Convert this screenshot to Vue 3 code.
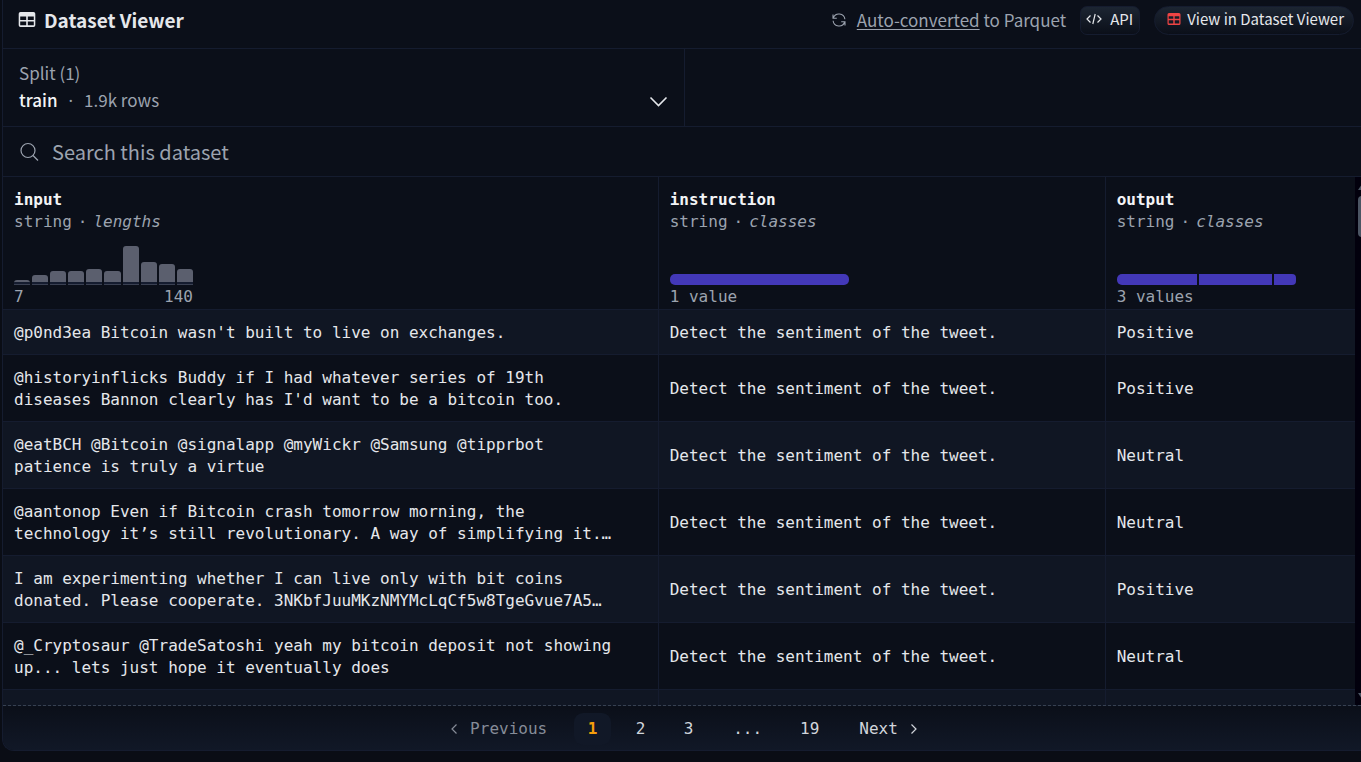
<script setup>
import { ref } from 'vue'

const query = ref('')
const bars = [4, 9, 13, 13, 15, 13, 38, 22, 20, 15]
const prompt = 'Detect the sentiment of the tweet.'
const rows = [
  { input: "@p0nd3ea Bitcoin wasn't built to live on exchanges.", output: 'Positive' },
  { input: "@historyinflicks Buddy if I had whatever series of 19th\ndiseases Bannon clearly has I'd want to be a bitcoin too.", output: 'Positive' },
  { input: '@eatBCH @Bitcoin @signalapp @myWickr @Samsung @tipprbot\npatience is truly a virtue', output: 'Neutral' },
  { input: '@aantonop Even if Bitcoin crash tomorrow morning, the\ntechnology it’s still revolutionary. A way of simplifying it.…', output: 'Neutral' },
  { input: 'I am experimenting whether I can live only with bit coins\ndonated. Please cooperate. 3NKbfJuuMKzNMYMcLqCf5w8TgeGvue7A5…', output: 'Positive' },
  { input: '@_Cryptosaur @TradeSatoshi yeah my bitcoin deposit not showing\nup... lets just hope it eventually does', output: 'Neutral' },
]
const pages = ['1', '2', '3', '...', '19']
</script>

<template>
  <main class="viewer">
    <header class="top">
      <h1>
        <svg width="18" height="16" viewBox="0 0 18 16" aria-hidden="true">
          <path fill="currentColor" fill-rule="evenodd" d="M2.5 0h13A1.800 1.800 0 0 1 17.300 1.800v11.400a1.800 1.800 0 0 1-1.800 1.800h-13A1.800 1.800 0 0 1 .7 13.200V1.800A1.800 1.800 0 0 1 2.500 0ZM2.200 4.500v3.500h6V4.500Zm7.600 0v3.500h6V4.500ZM2.200 9.500v3.800h6V9.500Zm7.600 0v3.800h6V9.500Z" />
        </svg>
        Dataset Viewer
      </h1>
      <p class="converted">
        <svg width="16" height="16" viewBox="0 0 16 16" fill="none" stroke="currentColor" stroke-width="1.100" aria-hidden="true">
          <path d="M2 2.500v3.800h3.800M14 13.500V9.700h-3.800M2.300 6A6 6 0 0 1 13.900 7.300M13.700 10A6 6 0 0 1 2.100 8.700" />
        </svg>
        <span><a href="#">Auto-converted</a> to Parquet</span>
      </p>
      <button class="chip api" type="button">
        <svg width="16" height="12" viewBox="0 0 16 12" fill="none" stroke="currentColor" stroke-width="1.200" aria-hidden="true">
          <path d="M4.500 2.500 1 6l3.500 3.500M11.500 2.500 15 6l-3.500 3.500M9.200 1 6.800 11" />
        </svg>
        API
      </button>
      <button class="chip pill" type="button">
        <svg width="14" height="12" viewBox="0 0 14 12" aria-hidden="true">
          <path fill="#ef4444" fill-rule="evenodd" d="M2 0h10a1.500 1.500 0 0 1 1.500 1.500v9A1.500 1.500 0 0 1 12 12H2a1.500 1.500 0 0 1-1.500-1.500v-9A1.500 1.500 0 0 1 2 0ZM1.700 3.300v2.500h4.600V3.300Zm6 0v2.500h4.600V3.300ZM1.700 7.200v3.400h4.600V7.200Zm6 0v3.400h4.600V7.200Z" />
        </svg>
        View in Dataset Viewer
      </button>
    </header>

    <section class="splits">
      <button class="split" type="button">
        <span>
          <span class="line">Split (1)</span>
          <span class="line"><span class="name">train</span><span class="dot">·</span>1.9k rows</span>
        </span>
        <svg width="20" height="12" viewBox="0 0 20 12" fill="none" stroke="currentColor" stroke-width="1.600" aria-hidden="true">
          <path d="m2.500 1.500 8 8 8-8" />
        </svg>
      </button>
    </section>

    <label class="search">
      <svg width="20" height="20" viewBox="0 0 20 20" fill="none" stroke="currentColor" stroke-width="1.200" aria-hidden="true">
        <circle cx="9" cy="8.500" r="7" /><path d="m14 13.500 5 5" />
      </svg>
      <input v-model="query" type="text" placeholder="Search this dataset" aria-label="Search this dataset">
    </label>

    <div class="grid">
      <div class="scroller">
        <table>
          <colgroup><col class="c1"><col class="c2"><col class="c3"></colgroup>
          <thead>
            <tr>
              <th scope="col">
                <div class="field">input</div>
                <div class="kind">string<span class="sep">·</span><i>lengths</i></div>
                <div class="chart histogram">
                  <span v-for="(b, i) in bars" :key="i" :style="{ height: b + 'px' }"></span>
                </div>
                <div class="legend"><span>7</span><span>140</span></div>
              </th>
              <th scope="col">
                <div class="field">instruction</div>
                <div class="kind">string<span class="sep">·</span><i>classes</i></div>
                <div class="chart classes"><span class="full"></span></div>
                <div class="legend">1 value</div>
              </th>
              <th scope="col">
                <div class="field">output</div>
                <div class="kind">string<span class="sep">·</span><i>classes</i></div>
                <div class="chart classes"><span class="s1"></span><span class="s2"></span><span class="s3"></span></div>
                <div class="legend">3 values</div>
              </th>
            </tr>
          </thead>
          <tbody>
            <tr v-for="r in rows" :key="r.input">
              <td>{{ r.input }}</td>
              <td>{{ prompt }}</td>
              <td>{{ r.output }}</td>
            </tr>
            <tr><td>&nbsp;</td><td></td><td></td></tr>
          </tbody>
        </table>
      </div>
      <div class="scrollbar" aria-hidden="true">
        <svg width="8" height="6" viewBox="0 0 8 6"><path d="M0 6 4 0l4 6Z" fill="#4b5563" /></svg>
        <span class="thumb"></span>
        <svg width="8" height="6" viewBox="0 0 8 6"><path d="m0 0 4 6 4-6Z" fill="#4b5563" /></svg>
      </div>
    </div>

    <nav class="pager" aria-label="Pages">
      <a class="prev" href="#">
        <svg width="8" height="12" viewBox="0 0 8 12" fill="none" stroke="currentColor" stroke-width="1.200" aria-hidden="true"><path d="M6.500 1.500 2 6l4.500 4.500" /></svg>
        Previous
      </a>
      <a v-for="p in pages" :key="p" class="page" :class="{ current: p === '1', gap: p === '...' }" href="#">{{ p }}</a>
      <a class="next" href="#">
        Next
        <svg width="8" height="12" viewBox="0 0 8 12" fill="none" stroke="currentColor" stroke-width="1.200" aria-hidden="true"><path d="M1.500 1.500 6 6l-4.500 4.500" /></svg>
      </a>
    </nav>
  </main>
</template>

<style>
body { background: #0a0d15; }
</style>

<style scoped>
.viewer {
  --line: #151c2f;
  box-sizing: border-box;
  height: calc(100vh - 11px);
  margin-left: 2px;
  display: flex;
  flex-direction: column;
  border-left: 1px solid var(--line);
  border-bottom: 1px solid var(--line);
  border-bottom-left-radius: 12px;
  overflow: hidden;
  background: #0b0f19;
  color: #9ca3af;
  font-family: "Noto Sans CJK SC", "Noto Sans", sans-serif;
  font-size: 17px;
}
svg { flex: none; }
button, input { font: inherit; color: inherit; border: 0; background: none; padding: 0; }
.top {
  height: 40px;
  padding: 0 7px 8px 15px;
  display: flex;
  align-items: center;
  border-bottom: 1px solid var(--line);
}
h1 {
  margin: 0 auto 0 0;
  display: flex;
  align-items: center;
  gap: 8px;
  color: #e5e7eb;
  font-size: 19px;
  line-height: 24px;
  font-weight: 700;
}
.converted { margin: 0 14px 0 0; display: flex; align-items: center; gap: 10px; line-height: 24px; }
.converted a { color: inherit; text-underline-offset: 2px; text-decoration-thickness: 1px; }
.chip {
  box-sizing: border-box;
  height: 29px;
  display: flex;
  align-items: center;
  gap: 8px;
  color: #e5e7eb;
  font-size: 15px;
  line-height: 20px;
  border: 1px solid #151c2f;
  background: linear-gradient(#1c2532, #0b0f19);
}
.api { padding: 0 6px 2px 5px; border-radius: 7px; margin-right: 14px; }
.pill { padding: 0 9px 2px 12px; border-radius: 15px; gap: 6px; }
.splits { display: flex; border-bottom: 1px solid var(--line); }
.split {
  box-sizing: border-box;
  width: calc(50% + 3px);
  height: 77px;
  padding: 0 16px 2px;
  display: flex;
  justify-content: space-between;
  align-items: center;
  text-align: left;
  border-right: 1px solid var(--line);
}
.split svg { color: #e5e7eb; margin-top: 30px; }
.line { display: block; line-height: 27px; }
.name { color: #f3f4f6; font-weight: 500; }
.dot { padding: 0 11px; font-family: "Noto Sans", sans-serif; }
.search {
  height: 49px;
  padding: 0 16px;
  display: flex;
  align-items: center;
  gap: 13px;
  border-bottom: 1px solid var(--line);
}
.search input { flex: 1; font-size: 20px; line-height: 28px; outline: 0; }
.search input::placeholder { color: #9ca3af; opacity: 1; }
.grid { flex: 1; min-height: 0; display: flex; }
.scroller { flex: 1; min-width: 0; overflow: hidden; }
table {
  width: 100%;
  table-layout: fixed;
  border-collapse: separate;
  border-spacing: 0;
  font-family: "DejaVu Sans Mono", monospace;
  font-size: 16px;
  line-height: 22px;
}
.c1 { width: 48.5%; }
.c2 { width: 33.06%; }
th, td {
  text-align: left;
  border-bottom: 1px solid var(--line);
  border-right: 1px solid var(--line);
}
th:last-child, td:last-child { border-right: 0; }
th { padding: 12px 11px 1px; font-weight: 400; vertical-align: top; }
td { padding: 12px 11px 10px; height: 22px; color: #e5e7eb; white-space: pre-line; }
tbody tr:nth-child(odd) { background: #101623; }
.field { color: #f3f4f6; font-weight: 700; }
.sep { padding: 0 6px; }
.chart { width: 179px; height: 52px; margin-bottom: 1px; display: flex; gap: 2px; align-items: flex-end; }
.histogram span { flex: 1; background: #5b5f6e; border-radius: 3px 3px 0 0; border-bottom: 1px solid #3a4052; box-shadow: inset 0 -2px #151c2f; }
.classes span { height: 11px; background: #4338b8; }
.classes .full { flex: 1; border-radius: 5px; }
.s1 { flex: 80; border-radius: 5px 0 0 5px; }
.s2 { flex: 72; }
.s3 { flex: 22; border-radius: 0 4px 4px 0; }
.legend { width: 179px; display: flex; justify-content: space-between; }
.scrollbar {
  width: 6px;
  overflow: hidden;
  box-sizing: border-box;
  padding: 7px 0 6px 3px;
  background: #02000d;
  display: flex;
  flex-direction: column;
}
.thumb { width: 8px; height: 41px; margin: 6px 0 auto; border-radius: 4px; background: #4b5563; flex: none; }
.pager {
  box-sizing: border-box;
  height: 45px;
  padding: 2px 0 0 4px;
  border-top: 1px dashed #374151;
  background: linear-gradient(#0b0f19, #111827);
  display: flex;
  align-items: center;
  justify-content: center;
  font-family: "DejaVu Sans Mono", monospace;
  font-size: 16px;
  line-height: 22px;
}
.pager a { color: #d1d5db; text-decoration: none; }
.pager .prev, .pager .next { display: flex; align-items: center; gap: 12px; }
.pager .prev { color: #868c98; margin-right: 27px; }
.pager .next { margin-left: 17px; }
.page { box-sizing: border-box; min-width: 37px; padding: 5px 12px; margin-right: 11px; text-align: center; border-radius: 9px; }
.page.gap { padding: 5px 15px; }
.pager .page.current { color: #f59e0b; font-weight: 700; background: #111827; }
</style>
